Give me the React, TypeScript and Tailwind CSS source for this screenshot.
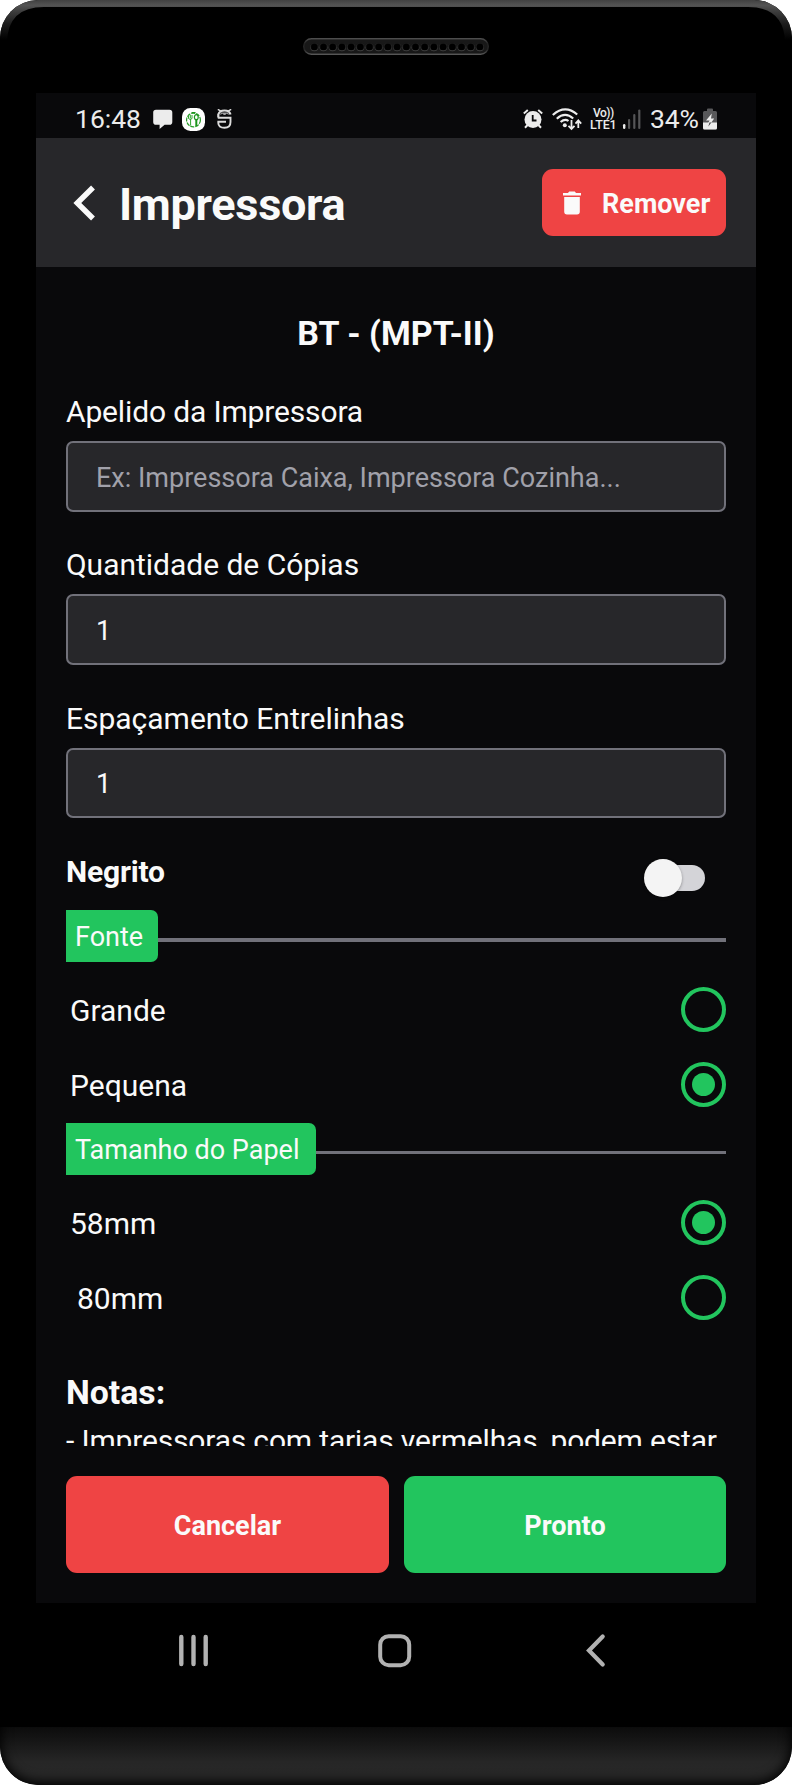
import { ReactNode } from "react";

function FrameHighlight() {
  return (
    <svg className="pointer-events-none absolute top-0 left-0" width="792" height="60" viewBox="0 0 792 60">
      <defs>
        <linearGradient id="rim" gradientUnits="userSpaceOnUse" x1="0" y1="0" x2="0" y2="40">
          <stop offset="0" stopColor="#414141" />
          <stop offset="0.13" stopColor="#535353" />
          <stop offset="0.3" stopColor="#3c3c3c" />
          <stop offset="0.6" stopColor="#1c1c1c" />
          <stop offset="1" stopColor="#000" />
        </linearGradient>
      </defs>
      <path
        d="M0 42V38Q0 0 38 0H754Q792 0 792 38V42H785Q784 7 748 7H44Q8 7 7 42Z"
        fill="url(#rim)"
      />
    </svg>
  );
}

function Speaker() {
  const holes = Array.from({ length: 19 }, (_, i) => 11.3 + i * 9.2);
  return (
    <svg width="186" height="17" viewBox="0 0 186 17">
      <defs>
        <linearGradient id="spk" x1="0" y1="0" x2="0" y2="1">
          <stop offset="0" stopColor="#4d4d4d" />
          <stop offset="0.3" stopColor="#252525" />
          <stop offset="0.7" stopColor="#252525" />
          <stop offset="1" stopColor="#565656" />
        </linearGradient>
      </defs>
      <rect x="0.7" y="0.7" width="184.6" height="15.6" rx="7.8" fill="#181818" stroke="url(#spk)" strokeWidth="1.4" />
      {holes.map((x) => (
        <g key={x}>
          <circle cx={x} cy="9.2" r="4" fill="#464646" />
          <circle cx={x} cy="8.6" r="3.9" fill="#181818" />
          <circle cx={x} cy="8.9" r="3.2" fill="#000" />
        </g>
      ))}
    </svg>
  );
}

function StatusBar() {
  return (
    <div className="flex h-[45px] items-start justify-between pr-[39px] pl-[39px] text-[#ececec]">
      <div className="flex h-[45px]">
        <span className="mt-[11px] w-[78px] text-[26.500px] leading-[30px] whitespace-nowrap">16:48</span>
        <svg className="mt-[16px]" width="20" height="21" viewBox="0 0 20 21">
          <path d="M3 .8h13.5a2.8 2.8 0 0 1 2.8 2.8v9.3a2.8 2.8 0 0 1-2.8 2.8H11.6L6.6 20V15.700H3A2.8 2.8 0 0 1 .2 12.900V3.600A2.8 2.8 0 0 1 3 .8Z" fill="#ececec" />
        </svg>
        <svg className="mt-[15px] ml-[9px]" width="23" height="23" viewBox="0 0 23 23">
          <rect width="23" height="23" rx="8.500" fill="#fff" />
          <circle cx="11.500" cy="12" r="6.900" fill="none" stroke="#2a9d2a" strokeWidth="1.200" strokeDasharray="4 1" />
          <path d="M9.500 4.600h4" stroke="#1d941d" strokeWidth="1.400" />
          <path d="M6.500 7v3.500M8.300 7v3.500M10 7v3.500M6.500 10.500q1.700 2 3.500 0M8.600 11v6.500" stroke="#2fa52f" strokeWidth="1" fill="none" />
          <ellipse cx="14.300" cy="9.200" rx="1.900" ry="2.500" fill="none" stroke="#1d941d" strokeWidth="1.200" />
          <path d="M14.300 11.500v6.500" stroke="#1d941d" strokeWidth="2" />
        </svg>
        <svg className="mt-[16px] ml-[12px]" width="16" height="21" viewBox="0 0 16 21">
          <path d="M.8.400 4 2.200M14.200.400 11 2.200" stroke="#dcdcdc" strokeWidth="1.500" />
          <path d="M1.300 8.500V5.500Q2.500 1.500 7.500 1.500T13.500 5.500" fill="none" stroke="#dcdcdc" strokeWidth="2.200" />
          <path d="M3.500 3.500h8v2.500h-8Z" fill="#a0a0a2" />
          <circle cx="5.300" cy="6" r="1.200" fill="#09090b" />
          <circle cx="9.800" cy="6" r="1.200" fill="#09090b" />
          <path d="M.8 8.800H13.500V13Q13.500 18.800 7.500 18.800T1.300 14V12.800H9" fill="none" stroke="#dcdcdc" strokeWidth="1.900" />
        </svg>
      </div>
      <div className="flex h-[45px]">
        <svg className="mt-[16px]" width="20" height="20" viewBox="0 0 20 20">
          <circle cx="10" cy="10.600" r="8.500" fill="#ececec" />
          <path d="M.8 4.400 4.800 1M19.200 4.400 15.200 1M4.500 16 2 18.700M15.500 16l2.500 2.700" stroke="#ececec" strokeWidth="2" />
          <path d="M9.700 6V11.500H13.500" fill="none" stroke="#09090b" strokeWidth="1.800" />
        </svg>
        <svg className="mt-[15px] ml-[9px]" width="30" height="23" viewBox="0 0 30 23">
          <g fill="none" stroke="#ececec" strokeWidth="2.200">
            <path d="M.8 7Q13-4 25.200 6.500" />
            <path d="M4.800 10.800Q13 3.300 21.200 10.500" />
            <path d="M8.600 14Q13 10.200 16.500 13" />
          </g>
          <circle cx="12.800" cy="17.200" r="2" fill="#ececec" />
          <path d="M19.500 12v8.500M16.500 17.800l3 3.200 3-3.200M26.300 20v-7.500M23.500 15.600l2.800-3.200 2.900 3.200" fill="none" stroke="#ececec" strokeWidth="1.800" />
        </svg>
        <div className="mt-[14px] ml-[8px] flex w-[29px] flex-col font-medium whitespace-nowrap">
          <span className="pl-[3px] text-[12px] leading-[12px] tracking-[-0.500px]">Vo))</span>
          <span className="text-[12.500px] leading-[12px] tracking-[-0.100px]">LTE1</span>
        </div>
        <svg className="mt-[16px] ml-[3px]" width="20" height="21" viewBox="0 0 20 21">
          <rect x="1" y="15" width="2.400" height="5" rx="1.200" fill="#ececec" />
          <rect x="6" y="10" width="2.200" height="10" rx="1.100" fill="#555557" />
          <rect x="11.200" y="5" width="2.200" height="15" rx="1.100" fill="#555557" />
          <rect x="16.200" y=".5" width="2.200" height="19.500" rx="1.100" fill="#555557" />
        </svg>
        <span className="mt-[11px] ml-[8px] w-[53px] text-[26.500px] leading-[30px] tracking-[-0.200px]">34%</span>
        <svg className="mt-[15px]" width="14" height="22" viewBox="0 0 14 22">
          <path d="M4 1.500Q4 .5 5 .5h4q1 0 1 1V3h2.500Q14 3 14 4.500V20Q14 21.500 12.500 21.500h-11Q0 21.500 0 20V4.500Q0 3 1.500 3H4Z" fill="#58585a" />
          <path d="M0 14.500H14V20Q14 21.500 12.500 21.500h-11Q0 21.500 0 20Z" fill="#ececec" />
          <path d="M8.800 5.500 3 12.500h3.500L5.200 15H8l3.200-4.500H8Z" fill="#ececec" />
          <path d="M6.500 14.500H8.300L5.300 18.500Z" fill="#3a3a3c" />
        </svg>
      </div>
    </div>
  );
}

function Header() {
  return (
    <div className="flex h-[129px] items-center bg-[#27272a] pr-[30px] pl-[36px]">
      <svg width="24" height="36" viewBox="0 0 24 36">
        <path d="M21 2.500 5.300 18 21 33.500" fill="none" stroke="#fafafa" strokeWidth="5.500" />
      </svg>
      <h1 className="mt-[5px] ml-[23px] text-[45px] leading-[54px] font-bold tracking-[-0.300px]">Impressora</h1>
      <button className="ml-auto flex h-[67px] w-[184px] items-center rounded-[11px] bg-[#ef4444] pl-[21px]">
        <svg className="mt-px" width="18" height="24" viewBox="0 0 18 24">
          <path d="M0 2h5l1.200-1.500h5.600L13 2h5v2.400H0ZM1.200 6h15.600v14.800a2.800 2.800 0 0 1-2.800 2.700H4a2.800 2.800 0 0 1-2.800-2.700Z" fill="#fafafa" />
        </svg>
        <span className="mt-[3px] ml-[21px] text-[27px] leading-[34px] font-bold">Remover</span>
      </button>
    </div>
  );
}

function Field({ label, value, placeholder, box, tight }: { label: string; value?: string; placeholder?: string; box: string; tight?: boolean }) {
  return (
    <label className="block">
      <span className={"block text-[30px] leading-[40px] " + (tight ? "tracking-[-0.150px]" : "tracking-[-0.020px]")}>{label}</span>
      <input
        readOnly
        value={value ?? ""}
        placeholder={placeholder}
        className={
          "mt-[9px] block w-full rounded-[7px] border-2 border-[#71717a] bg-[#27272a] px-[28px] pt-[2px] text-[27px] text-[#fafafa] placeholder-[#a1a1aa] outline-none " + box
        }
      />
    </label>
  );
}

function Divider({ label, chip, line }: { label: string; chip: string; line: string }) {
  return (
    <div className="flex h-[52px] items-start">
      <div className={"h-[52px] shrink-0 rounded-r-[7px] bg-[#22c55e] pt-[9px] pl-[9px] text-[27px] leading-[36px] whitespace-nowrap " + chip}>
        {label}
      </div>
      <div className={"mt-[28px] grow bg-[#71717a] " + line} />
    </div>
  );
}

function Option({ children, checked, pad }: { children: ReactNode; checked?: boolean; pad: string }) {
  return (
    <div className={"flex h-[45px] items-center justify-between " + pad}>
      <span className="mt-[2px] text-[30px] leading-[40px]">{children}</span>
      <span className="flex size-[45px] items-center justify-center rounded-full border-4 border-[#22c55e]">
        {checked && <span className="size-[23px] rounded-full bg-[#22c55e]" />}
      </span>
    </div>
  );
}

function Toggle() {
  return (
    <div className="mt-[8px] mr-[21px] flex h-[38px] w-[61px] items-center">
      <span className="z-10 size-[38px] shrink-0 rounded-full bg-[#f4f4f4] shadow-[0_1px_3px_rgba(0,0,0,0.35)]" />
      <span className="-ml-[20px] h-[26px] w-[43px] rounded-r-full bg-[#d4d4d8]" />
    </div>
  );
}

export default function App() {
  return (
    <div className="h-[1785px] w-[792px] bg-white font-['Roboto',sans-serif] text-[#fafafa]">
      <div className="relative flex h-[1785px] w-[792px] flex-col overflow-hidden rounded-[38px] bg-black">
        <FrameHighlight />
        <div className="flex h-[93px] shrink-0 justify-center pt-[38px] pr-px">
          <Speaker />
        </div>

        <div className="mx-[36px] flex h-[1510px] shrink-0 flex-col bg-[#09090b]">
          <StatusBar />
          <Header />
          <div className="h-[1179px] overflow-hidden px-[30px] pt-[43px]">
            <h2 className="mb-[36px] text-center text-[34px] leading-[46px] font-bold">BT - (MPT-II)</h2>
            <Field label="Apelido da Impressora" placeholder="Ex: Impressora Caixa, Impressora Cozinha..." box="mb-[33px] h-[71px]" tight />
            <Field label="Quantidade de Cópias" value="1" box="mb-[34px] h-[71px]" />
            <Field label="Espaçamento Entrelinhas" value="1" box="mb-[33px] h-[70px]" />
            <div className="flex h-[59px] items-start justify-between">
              <span className="mt-px text-[30px] leading-[40px] font-bold tracking-[-0.200px]">Negrito</span>
              <Toggle />
            </div>
            <Divider label="Fonte" chip="w-[92px]" line="h-[4px]" />
            <div className="mt-[25px] mb-[16px] flex flex-col gap-[30px]">
              <Option pad="pl-[4px]">Grande</Option>
              <Option pad="pl-[4px]" checked>Pequena</Option>
            </div>
            <Divider label="Tamanho do Papel" chip="w-[250px]" line="h-[3px]" />
            <div className="mt-[25px] flex flex-col gap-[30px]">
              <Option pad="pl-[4px]" checked>58mm</Option>
              <Option pad="pl-[11px]">80mm</Option>
            </div>
            <h3 className="mt-[50px] text-[33.750px] leading-[46px] font-bold">Notas:</h3>
            <p className="mt-[5px] text-[30px] leading-[40px] tracking-[-0.170px] whitespace-nowrap">- Impressoras com tarjas vermelhas, podem estar</p>
          </div>
          <div className="mt-[30px] flex gap-[15px] px-[30px] text-[27px] font-bold">
            <button className="h-[97px] w-[323px] rounded-[11px] bg-[#ef4444] pt-[3px]">Cancelar</button>
            <button className="h-[97px] w-[322px] rounded-[11px] bg-[#22c55e] pt-[3px]">Pronto</button>
          </div>
        </div>

        <div className="flex h-[124px] shrink-0 items-start pt-[30px] pl-[177px]">
          <svg width="34" height="36" viewBox="0 0 34 36">
            <path d="M4.300 4v27M16.500 4v27M28.700 4v27" stroke="#b2b2b2" strokeWidth="4.400" strokeLinecap="round" />
          </svg>
          <svg className="ml-[166px]" width="36" height="36" viewBox="0 0 36 36">
            <rect x="3.200" y="3.200" width="29" height="29" rx="8.500" fill="none" stroke="#b2b2b2" strokeWidth="4" />
          </svg>
          <svg className="ml-[171px]" width="24" height="36" viewBox="0 0 24 36">
            <path d="M18.700 3.500 5 17.500 18.700 31.500" fill="none" stroke="#b2b2b2" strokeWidth="4.200" strokeLinecap="round" />
          </svg>
        </div>
        <div className="h-[58px] shrink-0 overflow-hidden rounded-b-[38px] bg-linear-to-b from-[#0c0c0c] via-[#262626] via-60% to-[#282828] to-80%">
          <div className="-mt-[60px] h-[118px] rounded-b-[38px] shadow-[inset_0_-2px_12px_1px_#000]" />
        </div>
      </div>
    </div>
  );
}
